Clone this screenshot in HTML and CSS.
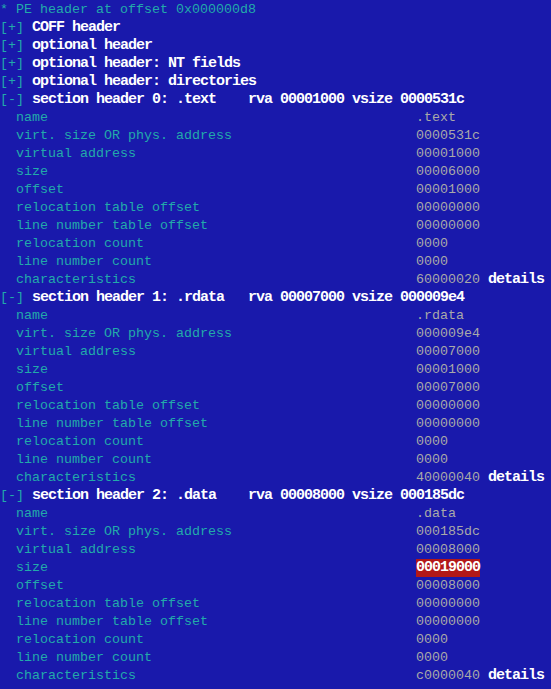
FILE: index.html
```html
<!DOCTYPE html>
<html>
<head>
<meta charset="utf-8">
<link rel="stylesheet" href="styles.css">
</head>
<body>
<div class="screen">
  <div class="line info">* PE header at offset 0x000000d8</div>
  <div class="line head"><span class="tog">[+]</span> <b>COFF header</b></div>
  <div class="line head"><span class="tog">[+]</span> <b>optional header</b></div>
  <div class="line head"><span class="tog">[+]</span> <b>optional header: NT fields</b></div>
  <div class="line head"><span class="tog">[+]</span> <b>optional header: directories</b></div>

  <div class="line head"><span class="tog">[-]</span> <b>section header 0: .text    rva 00001000 vsize 0000531c</b></div>
  <div class="field"><span class="k">name</span><span class="v">.text</span></div>
  <div class="field"><span class="k">virt. size OR phys. address</span><span class="v">0000531c</span></div>
  <div class="field"><span class="k">virtual address</span><span class="v">00001000</span></div>
  <div class="field"><span class="k">size</span><span class="v">00006000</span></div>
  <div class="field"><span class="k">offset</span><span class="v">00001000</span></div>
  <div class="field"><span class="k">relocation table offset</span><span class="v">00000000</span></div>
  <div class="field"><span class="k">line number table offset</span><span class="v">00000000</span></div>
  <div class="field"><span class="k">relocation count</span><span class="v">0000</span></div>
  <div class="field"><span class="k">line number count</span><span class="v">0000</span></div>
  <div class="field"><span class="k">characteristics</span><span class="v">60000020 <b class="det">details</b></span></div>

  <div class="line head"><span class="tog">[-]</span> <b>section header 1: .rdata   rva 00007000 vsize 000009e4</b></div>
  <div class="field"><span class="k">name</span><span class="v">.rdata</span></div>
  <div class="field"><span class="k">virt. size OR phys. address</span><span class="v">000009e4</span></div>
  <div class="field"><span class="k">virtual address</span><span class="v">00007000</span></div>
  <div class="field"><span class="k">size</span><span class="v">00001000</span></div>
  <div class="field"><span class="k">offset</span><span class="v">00007000</span></div>
  <div class="field"><span class="k">relocation table offset</span><span class="v">00000000</span></div>
  <div class="field"><span class="k">line number table offset</span><span class="v">00000000</span></div>
  <div class="field"><span class="k">relocation count</span><span class="v">0000</span></div>
  <div class="field"><span class="k">line number count</span><span class="v">0000</span></div>
  <div class="field"><span class="k">characteristics</span><span class="v">40000040 <b class="det">details</b></span></div>

  <div class="line head"><span class="tog">[-]</span> <b>section header 2: .data    rva 00008000 vsize 000185dc</b></div>
  <div class="field"><span class="k">name</span><span class="v">.data</span></div>
  <div class="field"><span class="k">virt. size OR phys. address</span><span class="v">000185dc</span></div>
  <div class="field"><span class="k">virtual address</span><span class="v">00008000</span></div>
  <div class="field"><span class="k">size</span><span class="v"><b class="hl">00019000</b></span></div>
  <div class="field"><span class="k">offset</span><span class="v">00008000</span></div>
  <div class="field"><span class="k">relocation table offset</span><span class="v">00000000</span></div>
  <div class="field"><span class="k">line number table offset</span><span class="v">00000000</span></div>
  <div class="field"><span class="k">relocation count</span><span class="v">0000</span></div>
  <div class="field"><span class="k">line number count</span><span class="v">0000</span></div>
  <div class="field"><span class="k">characteristics</span><span class="v">c0000040 <b class="det">details</b></span></div>
</div>
</body>
</html>
```

FILE: styles.css
```css
html, body {
  margin: 0;
  padding: 0;
  background: #1919ab;
}
.screen {
  width: 551px;
  height: 689px;
  box-sizing: border-box;
  padding-top: 1px;
  background: #1919ab;
  font-family: "Liberation Mono", "DejaVu Sans Mono", monospace;
  font-size: 13.333px;
  line-height: 18px;
  color: #22aaaa;
  overflow: hidden;
}
.line {
  height: 18px;
  white-space: pre;
}
.info {
  color: #22aaaa;
}
.tog {
  color: #22aaaa;
}
.head b {
  color: #ffffff;
  font-weight: bold;
  font-size: 15px;
  letter-spacing: -1px;
  line-height: 18px;
}
.field {
  display: grid;
  grid-template-columns: 400px auto;
  padding-left: 16px;
  height: 18px;
  white-space: pre;
}
.k {
  color: #22aaaa;
}
.v {
  color: #a9a9a9;
}
.det {
  color: #ffffff;
  font-weight: bold;
  font-size: 15px;
  letter-spacing: -1px;
  line-height: 18px;
}
.hl {
  color: #ffffff;
  background: #b21818;
  font-weight: bold;
  font-size: 15px;
  letter-spacing: -1px;
  line-height: 18px;
  display: inline-block;
  width: 64px;
  height: 18px;
  vertical-align: top;
}
```
